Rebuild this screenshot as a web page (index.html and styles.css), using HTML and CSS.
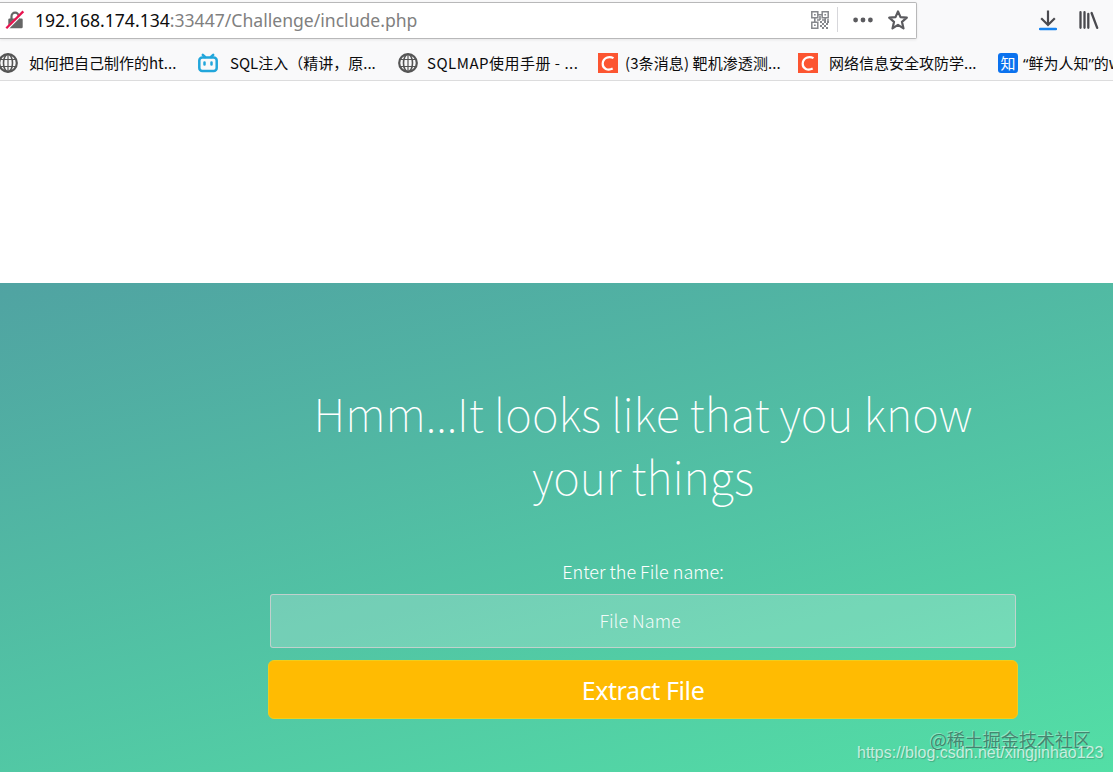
FILE: index.html
```html
<!DOCTYPE html>
<html lang="zh-CN">
<head>
    <meta charset="UTF-8">
    <title>Include</title>
    <link rel="stylesheet" href="styles.css">
</head>
<body>
    <header class="browser">
        <div class="toolbar">
            <div class="url-bar">
                <svg class="lock" width="20" height="20" viewBox="0 0 20 20">
                    <path d="M6.500 10V6.200a3.600 3.600 0 0 1 7.200 0V10" fill="none" stroke="#666" stroke-width="2.2"/>
                    <rect x="3.3" y="8.6" width="14.4" height="9.6" rx="1.2" fill="#666"/>
                    <path d="M2 18.600L18.400 2.200" stroke="#fff" stroke-width="3"/>
                    <path d="M1.300 18.200L18.300 1.400" stroke="#e8134f" stroke-width="2.3"/>
                </svg>
                <span class="url"><b>192.168.174.134</b>:33447/Challenge/include.php</span>
                <svg class="qr" width="18" height="18" viewBox="0 0 18 18" fill="none" stroke="#85878c" stroke-width="1.5">
                    <path d="M.8.8h6v6h-6zM11.200.8h6v6h-6zM.8 11.200h6v6h-6z"/>
                    <path d="M3 3.800h1.700M13.400 3.800h1.700M3 14.200h1.700M7 3.800h4M9 5v4M3.800 7v4M14.200 7v4M6 9h3M11 9h3M16 9h2" stroke-width="1.6"/>
                    <path d="M9 11h2M11 13h2M13 11h2M15 13h2M9 15h2M13 15h2M11 17h2M15 17h2M16 11h2" stroke-width="2"/>
                </svg>
                <span class="divider"></span>
                <svg class="dots" width="20" height="6" viewBox="0 0 20 6" fill="#5b5b5f">
                    <circle cx="2.6" cy="3" r="2.4"/>
                    <circle cx="10" cy="3" r="2.4"/>
                    <circle cx="17.4" cy="3" r="2.4"/>
                </svg>
                <svg class="star" width="20" height="20" viewBox="0 0 20 20">
                    <path d="M10 1.400l2.500 5.700 6.300.6-4.800 4.200 1.500 6.500-5.500-3.500-5.500 3.500 1.500-6.500L1.200 7.700l6.300-.6z" fill="none" stroke="#5b5b5f" stroke-width="2.2" stroke-linejoin="round"/>
                </svg>
            </div>
            <svg class="download" width="18" height="21" viewBox="0 0 18 21" fill="none">
                <path d="M9 .5v14M2.200 8.200L9 15l6.800-6.800" stroke="#4a4a4f" stroke-width="2.2"/>
                <path d="M1 19h16" stroke="#1683ef" stroke-width="2.4" stroke-linecap="round"/>
            </svg>
            <svg class="library" width="20" height="18" viewBox="0 0 20 18" fill="none" stroke="#4a4a4f" stroke-width="2.3" stroke-linecap="round">
                <path d="M1.500 1.200v15.600M5.500 1.200v15.600M9.300 3v13.800M12.600 2l5.600 14.800"/>
            </svg>
        </div>
        <nav class="bookmarks">
            <a class="bookmark bookmark-first">
                <svg width="18" height="20" viewBox="2 0 18 20" fill="none" stroke="#555" stroke-width="1.6">
                    <circle cx="10" cy="10" r="8.8" stroke-width="2.2"/>
                    <ellipse cx="10" cy="10" rx="4.5" ry="8.8"/>
                    <path d="M10 1v18M2.500 6.500h15M2.500 13.500h15" stroke-width="1.2"/>
                </svg>
                <span class="label">如何把自己制作的ht...</span>
            </a>
            <a class="bookmark">
                <svg width="20" height="20" viewBox="0 0 20 20" fill="none" stroke="#22a6db" stroke-width="2.5" stroke-linecap="round">
                    <rect x="1.3" y="4.6" width="17.4" height="13.4" rx="3"/>
                    <path d="M4.800 1.800L7 4M15.200 1.800L13 4M6.500 9.500v2M13.500 9.500v2"/>
                </svg>
                <span class="label label-sql">SQL注入（精讲，原...</span>
            </a>
            <a class="bookmark">
                <svg width="20" height="20" viewBox="0 0 20 20" fill="none" stroke="#555" stroke-width="1.6">
                    <circle cx="10" cy="10" r="8.8" stroke-width="2.2"/>
                    <ellipse cx="10" cy="10" rx="4.5" ry="8.8"/>
                    <path d="M10 1v18M2.500 6.500h15M2.500 13.500h15" stroke-width="1.2"/>
                </svg>
                <span class="label label-map">SQLMAP使用手册 - ...</span>
            </a>
            <a class="bookmark">
                <svg width="20" height="20" viewBox="0 0 20 20">
                    <rect width="20" height="20" fill="#fc5531"/>
                    <path d="M15.500 5.100C11 2.600 5 4.800 4.700 10.500c-.2 5.300 5.200 7.400 10 5" fill="none" stroke="#fff" stroke-width="2.2"/>
                </svg>
                <span class="label label-msg">(3条消息) 靶机渗透测...</span>
            </a>
            <a class="bookmark">
                <svg width="20" height="20" viewBox="0 0 20 20">
                    <rect width="20" height="20" fill="#fc5531"/>
                    <path d="M15.500 5.100C11 2.600 5 4.800 4.700 10.500c-.2 5.300 5.200 7.400 10 5" fill="none" stroke="#fff" stroke-width="2.2"/>
                </svg>
                <span class="label">网络信息安全攻防学...</span>
            </a>
            <a class="bookmark bookmark-last">
                <span class="zhihu">知</span>
                <span class="label label-zhihu"><span class="quote">“</span>鲜为人知<span class="quote">”</span>的w</span>
            </a>
        </nav>
    </header>

    <main class="wrapper">
        <div class="container">
            <h1>Hmm...It looks like that you know your things</h1>
            <form class="form">
                <label for="file">Enter the File name:</label>
                <input type="text" id="file" placeholder="File Name">
                <button type="button">Extract File</button>
            </form>
        </div>
        <span class="mark mark-site">@稀土掘金技术社区</span>
        <span class="mark mark-blog">https://blog.csdn.net/xingjinhao123</span>
    </main>
</body>
</html>
```
FILE: styles.css
```css
* {
    box-sizing: border-box;
}

body {
    margin: 0;
    background: #fff;
    font-family: "Noto Sans CJK SC", sans-serif;
}

svg {
    display: block;
    flex-shrink: 0;
}

/* browser chrome */
.browser {
    height: 81px;
    background: #f9f9fa;
    border-bottom: 1px solid #dcdcdd;
}

.toolbar {
    display: flex;
    align-items: center;
    height: 41px;
}

.url-bar {
    display: flex;
    align-items: center;
    width: 917px;
    height: 37px;
    padding-left: 5px;
    padding-bottom: 2px;
    background: #fff;
    border: 1px solid #b8b8b9;
    border-left: none;
    border-radius: 0 2px 2px 0;
    box-shadow: 0 1px 3px rgba(0, 0, 0, 0.08);
}

.url {
    flex: 0 0 784px;
    padding-left: 10px;
    font-family: "Noto Sans", sans-serif;
    font-size: 17.58px;
    line-height: 34px;
    color: #808080;
    white-space: nowrap;
}

.url b {
    font-weight: 400;
    color: #0c0c0d;
}

.qr {
    margin-left: 2px;
}

.divider {
    width: 1px;
    height: 25px;
    margin: 0 15px 0 8px;
    background: #d7d7db;
}

.star {
    margin-left: 15px;
}

.download {
    margin-left: 122px;
}

.library {
    margin-left: 22px;
    margin-bottom: 2px;
}

.bookmarks {
    display: flex;
    height: 39px;
    overflow: hidden;
}

.bookmark {
    display: flex;
    align-items: center;
    flex: 0 0 200px;
    height: 43px;
}

.bookmark-first {
    flex-basis: 198px;
}

.bookmark-last {
    flex-basis: 115px;
}

.label {
    margin-left: 11px;
    font-size: 15px;
    line-height: 20px;
    color: #0c0c0d;
    white-space: nowrap;
}

.label-sql {
    margin-left: 12px;
}

.label-map {
    margin-left: 9px;
    letter-spacing: 0.5px;
}

.label-msg {
    margin-left: 7px;
    letter-spacing: 0.1px;
}

.label-zhihu {
    margin-left: 5px;
}

.quote {
    font-family: "Noto Sans", sans-serif;
}

.zhihu {
    width: 20px;
    height: 20px;
    background: #0b72ee;
    border-radius: 3px;
    color: #fff;
    font-size: 15px;
    line-height: 19px;
    text-align: center;
}

/* page */
.wrapper {
    position: relative;
    height: 489px;
    margin-top: 202px;
    overflow: hidden;
    background: linear-gradient(165deg, #50a3a2 0%, #53e3a6 100%) no-repeat;
    background-size: 1286px 500px;
}

.container {
    width: 750px;
    margin-left: 268px;
    padding-top: 98px;
    text-align: center;
    color: #fff;
}

h1 {
    margin: 0;
    font-size: 45.3px;
    font-weight: 100;
    line-height: 63px;
}

.form {
    display: flex;
    flex-direction: column;
    align-items: center;
    margin-top: 51px;
}

.form label {
    font-size: 18px;
    font-weight: 300;
    line-height: 26px;
}

.form input {
    width: 746px;
    height: 54px;
    margin-top: 10px;
    padding: 0 6px 2px 0;
    background: rgba(255, 255, 255, 0.2);
    border: 1px solid rgba(225, 210, 215, 0.7);
    border-radius: 3px;
    font-family: inherit;
    font-size: 18px;
    font-weight: 300;
    text-align: center;
}

.form input::placeholder {
    color: #fff;
    opacity: 0.9;
}

.form button {
    width: 750px;
    height: 59px;
    margin-top: 12px;
    padding: 0;
    background: #ffbb02;
    border: 1px solid #f0ce1c;
    border-radius: 6px;
    color: #fff;
    font-family: "Noto Sans", sans-serif;
    font-size: 25px;
    letter-spacing: -0.4px;
}

/* watermarks */
.mark {
    position: absolute;
    white-space: nowrap;
}

.mark-site {
    left: 930px;
    top: 442px;
    font-size: 18px;
    line-height: 28px;
    color: rgba(60, 110, 95, 0.8);
    text-shadow: -1px -1px 0 rgba(255, 255, 255, 0.35);
}

.mark-blog {
    left: 857px;
    top: 460px;
    font-family: "Liberation Sans", sans-serif;
    font-size: 16px;
    line-height: 20px;
    color: rgba(255, 255, 255, 0.7);
    text-shadow: 1px 1px 1px rgba(0, 0, 0, 0.2);
}
```
